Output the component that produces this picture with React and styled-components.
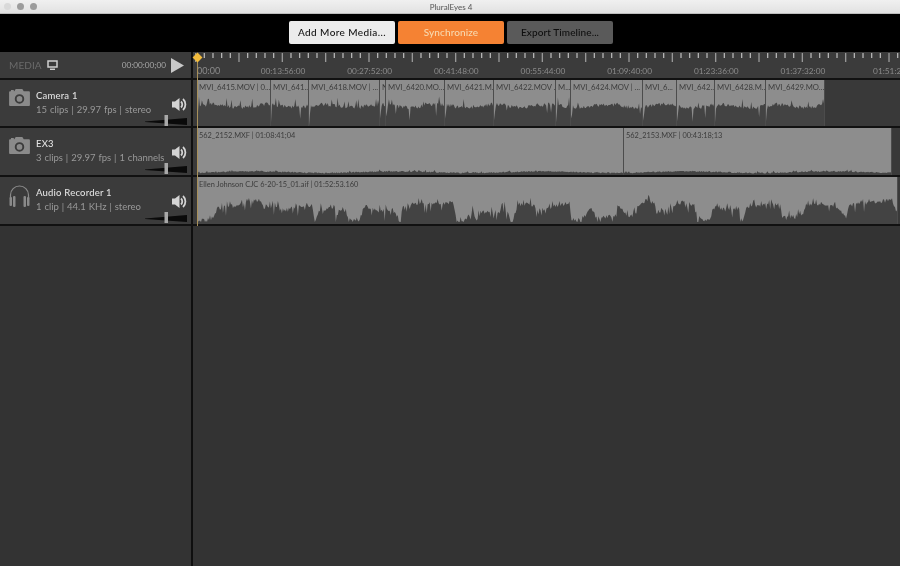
import React from 'react';
import styled, { createGlobalStyle } from 'styled-components';

const GlobalStyle = createGlobalStyle`
  html, body {
    margin: 0;
    padding: 0;
    background: #333;
    overflow: hidden;
  }
  * { box-sizing: border-box; }
`;

const LABELS = ['00:13:56:00', '00:27:52:00', '00:41:48:00', '00:55:44:00', '01:09:40:00', '01:23:36:00', '01:37:32:00', '01:51:28'];

const CAMERA_CLIPS = [
  ['MVI_6415.MOV | 0...', 197, 271],
  ['MVI_641...', 271, 309],
  ['MVI_6418.MOV | ...', 309, 380],
  ['N', 380, 386],
  ['MVI_6420.MO...', 386, 445],
  ['MVI_6421.M...', 445, 494],
  ['MVI_6422.MOV ...', 494, 556],
  ['M...', 556, 571],
  ['MVI_6424.MOV | ...', 571, 643],
  ['MVI_6...', 643, 677],
  ['MVI_642...', 677, 715],
  ['MVI_6428.M...', 715, 766],
  ['MVI_6429.MO...', 766, 825],
];

// top of the audio recorder waveform, read off the picture as [x, y]
const RECORDER_ENV = [
  [197, 221], [215, 218], [218, 208], [240, 205], [245, 200], [260, 200], [265, 210], [275, 205], [285, 210],
  [300, 207], [312, 205], [315, 220], [320, 210], [333, 208], [337, 215], [343, 208], [350, 218], [360, 220],
  [362, 210], [367, 205], [380, 212], [392, 208], [400, 222], [403, 206], [415, 203], [433, 204], [453, 202],
  [457, 220], [463, 222], [473, 212], [500, 212], [503, 202], [512, 222], [518, 207], [530, 203], [540, 210],
  [560, 205], [570, 203], [572, 220], [587, 215], [592, 207], [597, 218], [617, 215], [618, 205], [630, 218],
  [633, 210], [647, 200], [655, 203], [657, 214], [667, 208], [683, 202], [695, 205], [697, 218], [710, 220],
  [715, 208], [740, 210], [743, 222], [748, 207], [767, 204], [782, 205], [783, 218], [803, 215], [807, 205],
  [827, 204], [840, 210], [847, 218], [850, 205], [893, 200], [897, 212],
];

const envAt = x => {
  for (let i = 1; i < RECORDER_ENV.length; i++) {
    const [x0, y0] = RECORDER_ENV[i - 1];
    const [x1, y1] = RECORDER_ENV[i];
    if (x <= x1) return y0 + ((y1 - y0) * (x - x0)) / (x1 - x0);
  }
  return 212;
};

const makeRandom = seed => {
  let s = seed;
  return () => {
    s = (s * 16807) % 2147483647;
    return s / 2147483647;
  };
};

const cameraTop = (rand, x, from) => {
  const r = rand();
  let y = 104 + Math.sin(x / 9) * 1.5 + rand() * 4;
  if (r > 0.92) y -= 3 + rand() * 5;
  if (r < 0.03) y += 5 + rand() * 8;
  if (x - from < 2) y += 6;
  return y;
};

const ex3Top = (rand, x) => {
  const r = rand();
  let y = 171.5 + Math.sin(x / 23) * 0.8 + rand() * 1.2;
  if (r > 0.96) y -= 1.5;
  return y;
};

const recorderTop = (rand, x) => {
  const r = rand();
  let y = envAt(x) + rand() * 4 - 2;
  if (r > 0.88) y -= 2 + rand() * 4;
  if (r < 0.12) y += 3 + rand() * 6;
  return Math.min(y, 222);
};

const Waveform = ({ from, to, top, bottom, topFn, seed }) => {
  const rand = makeRandom(seed);
  const w = to - from;
  const h = bottom - top;
  const pts = [`0,${h}`];
  for (let x = from; x <= to; x++) {
    pts.push(`${x - from},${(topFn(rand, x, from) - top).toFixed(1)}`);
  }
  pts.push(`${w},${h}`);
  return (
    <WaveSvg viewBox={`0 0 ${w} ${h}`} preserveAspectRatio="none">
      <polygon points={pts.join(' ')} fill="#434343" />
    </WaveSvg>
  );
};

const Ruler = () => {
  const ticks = [];
  for (let i = 0; i < 82; i++) {
    const major = i % 5 === 0;
    const x = 2 + i * 8.667;
    ticks.push(<rect key={i} x={x} y="1" width="1.3" height={major ? 9 : 5} fill={major ? '#9a9a9a' : '#b5b5b5'} />);
  }
  return (
    <RulerTicks width="707" height="12">
      {ticks}
    </RulerTicks>
  );
};

const CameraIcon = () => (
  <IconSvg width="21" height="18" viewBox="0 0 22 19">
    <path
      fill="#8a8a8a"
      fillRule="evenodd"
      d="M7 1h7l1.5 2.5H21a1 1 0 0 1 1 1V18a1 1 0 0 1-1 1H1a1 1 0 0 1-1-1V4.500a1 1 0 0 1 1-1h1V2h3v1.500h.5zM11 6.500a5 5 0 1 0 0 10 5 5 0 0 0 0-10zM11 8.500a3 3 0 1 1 0 6 3 3 0 0 1 0-6z"
    />
  </IconSvg>
);

const HeadphonesIcon = () => (
  <IconSvg width="21" height="23" viewBox="0 0 21 23">
    <path fill="none" stroke="#8a8a8a" strokeWidth="1.2" d="M1.500 14V10a9 9 0 0 1 18 0v4" />
    <rect x="0.500" y="12" width="2.500" height="9" rx="1" fill="#8a8a8a" />
    <rect x="4" y="11" width="2.500" height="11" rx="1" fill="#8a8a8a" />
    <rect x="14.500" y="11" width="2.500" height="11" rx="1" fill="#8a8a8a" />
    <rect x="18" y="12" width="2.500" height="9" rx="1" fill="#8a8a8a" />
  </IconSvg>
);

const SpeakerIcon = () => (
  <svg width="15" height="15" viewBox="0 0 15 15">
    <path fill="#d4d4d4" d="M0 4.500h3L7.500 1v13L3 10.500H0z" />
    <path fill="none" stroke="#d4d4d4" strokeWidth="1.800" d="M9 4.500a4.200 4.200 0 0 1 0 6" />
    <path fill="none" stroke="#d4d4d4" strokeWidth="1.800" d="M11 2a7.500 7.500 0 0 1 0 11" />
  </svg>
);

const VolumeSlider = () => (
  <SliderSvg width="42" height="11" viewBox="0 0 42 11">
    <polygon points="0,6.500 42,3 42,10 0,7" fill="#0a0a0a" />
    <rect x="19.500" y="0" width="3.500" height="11" fill="#a8a8a8" />
  </SliderSvg>
);

const Track = ({ height, icon, name, meta, children }) => (
  <Row $height={height}>
    <Side>
      <IconSlot>{icon}</IconSlot>
      <TrackText>
        <TrackName>{name}</TrackName>
        <TrackMeta>{meta}</TrackMeta>
      </TrackText>
      <SpeakerSlot>
        <SpeakerIcon />
      </SpeakerSlot>
      <VolumeSlider />
    </Side>
    <Lane>{children}</Lane>
  </Row>
);

export default function App() {
  return (
    <Page>
      <GlobalStyle />
      <TitleBar>
        <Dots>
          <Dot $light />
          <Dot />
          <Dot />
        </Dots>
        PluralEyes 4
      </TitleBar>
      <Toolbar>
        <Button $kind="light">Add More Media...</Button>
        <Button $kind="orange">Synchronize</Button>
        <Button $kind="dark">Export Timeline...</Button>
      </Toolbar>
      <Main>
        <Row $height={28}>
          <Side $header>
            <MediaLabel>MEDIA</MediaLabel>
            <svg width="11" height="10" viewBox="0 0 11 10">
              <path fill="none" stroke="#cfcfcf" strokeWidth="1.500" d="M1 1h9v6H1z" />
              <path stroke="#cfcfcf" strokeWidth="1.500" d="M3 9.300h5" />
            </svg>
            <Timecode>00:00:00;00</Timecode>
            <svg width="13" height="15" viewBox="0 0 13 15">
              <polygon points="0,0 13,7.500 0,15" fill="#c9c9c9" />
            </svg>
          </Side>
          <RulerLane>
            <Ruler />
            <RulerLabels>
              <FirstLabel>00:00</FirstLabel>
              {LABELS.map(l => (
                <RulerLabel key={l}>{l}</RulerLabel>
              ))}
            </RulerLabels>
          </RulerLane>
        </Row>

        <Track height={48} icon={<CameraIcon />} name="Camera 1" meta="15 clips | 29.97 fps | stereo">
          {CAMERA_CLIPS.map(([label, from, to], i) => (
            <Clip key={from} $width={to - from}>
              <ClipLabel>{label}</ClipLabel>
              <Waveform from={from} to={to} top={93} bottom={126} topFn={cameraTop} seed={1000 + i * 77} />
            </Clip>
          ))}
        </Track>

        <Track height={49} icon={<CameraIcon />} name="EX3" meta="3 clips | 29.97 fps | 1 channels">
          <Clip $width={427}>
            <ClipLabel $small>562_2152.MXF | 01:08:41;04</ClipLabel>
            <Waveform from={197} to={624} top={141} bottom={175} topFn={ex3Top} seed={4242} />
          </Clip>
          <Clip $width={268}>
            <ClipLabel $small>562_2153.MXF | 00:43:18;13</ClipLabel>
            <Waveform from={624} to={892} top={141} bottom={175} topFn={ex3Top} seed={777} />
          </Clip>
        </Track>

        <Track height={49} icon={<HeadphonesIcon />} name="Audio Recorder 1" meta="1 clip | 44.1 KHz | stereo">
          <Clip $width={701}>
            <ClipLabel $small>Ellen Johnson CJC 6-20-15_01.aif | 01:52:53.160</ClipLabel>
            <Waveform from={197} to={898} top={190} bottom={224} topFn={recorderTop} seed={31337} />
          </Clip>
        </Track>

        <Filler>
          <Side $empty />
          <EmptyLane />
        </Filler>

        <Playhead />
        <Diamond />
      </Main>
    </Page>
  );
}

const Page = styled.div`
  width: 900px;
  height: 566px;
  display: flex;
  flex-direction: column;
  overflow: hidden;
  background: #333;
  font-family: Lato, 'Liberation Sans', sans-serif;
  filter: blur(0.35px);
`;

const TitleBar = styled.div`
  position: relative;
  height: 14px;
  flex: none;
  display: flex;
  align-items: center;
  justify-content: center;
  padding-left: 2px;
  background: linear-gradient(#f0f0f0, #e2e2e2);
  border-bottom: 1px solid #bdbdbd;
  color: #555;
  font-size: 8px;
`;

const Dots = styled.div`
  position: absolute;
  left: 4px;
  top: 3px;
  display: flex;
  gap: 6px;
`;

const Dot = styled.span`
  width: 7px;
  height: 7px;
  border-radius: 50%;
  background: ${props => (props.$light ? '#d9d9d9' : '#9c9c9c')};
`;

const Toolbar = styled.div`
  height: 38px;
  flex: none;
  display: flex;
  align-items: center;
  justify-content: center;
  gap: 3px;
  padding: 0 0 2px 2px;
  background: #000;
`;

const BUTTON_COLORS = {
  light: 'background: #ececec; color: #111; letter-spacing: 0.4px;',
  orange: 'background: #f58233; color: #f7d9b0; letter-spacing: 0.1px;',
  dark: 'background: #5a5a5a; color: #0e0e0e; letter-spacing: 0.1px;',
};

const Button = styled.div`
  width: 106px;
  height: 23px;
  display: flex;
  align-items: center;
  justify-content: center;
  border-radius: 2px;
  font-size: 10px;
  font-weight: 500;
  ${props => BUTTON_COLORS[props.$kind]}
`;

const Main = styled.div`
  position: relative;
  flex: 1;
  display: flex;
  flex-direction: column;
  min-height: 0;
`;

const Row = styled.div`
  flex: none;
  height: ${props => props.$height}px;
  display: flex;
  border-bottom: 2px solid #111;
`;

const Side = styled.div`
  position: relative;
  width: 193px;
  flex: none;
  display: flex;
  align-items: ${props => (props.$header ? 'center' : 'flex-start')};
  padding: ${props => (props.$header ? '0 7px 0 9px' : '0')};
  gap: ${props => (props.$header ? '5px' : '0')};
  background: ${props => (props.$empty ? '#333' : '#3b3b3b')};
  border-right: 2px solid #0f0f0f;
`;

const MediaLabel = styled.span`
  color: #6a6a6a;
  font-size: 10px;
  letter-spacing: 0.1px;
`;

const Timecode = styled.span`
  margin-left: auto;
  color: #a8a8a8;
  font-size: 8.2px;
`;

const IconSlot = styled.div`
  width: 36px;
  flex: none;
  padding: 8px 0 0 9px;
`;

const IconSvg = styled.svg`
  display: block;
`;

const TrackText = styled.div`
  display: flex;
  flex-direction: column;
  gap: 3px;
  padding-top: 10px;
`;

const TrackName = styled.div`
  color: #e0e0e0;
  font-size: 9.5px;
  line-height: 11px;
  font-weight: 500;
  letter-spacing: 0.2px;
`;

const TrackMeta = styled.div`
  color: #999;
  font-size: 9.5px;
  line-height: 12px;
  white-space: nowrap;
  word-spacing: 0.5px;
`;

const SpeakerSlot = styled.div`
  position: absolute;
  left: 172px;
  top: 17px;
  line-height: 0;
`;

const SliderSvg = styled.svg`
  position: absolute;
  left: 145px;
  top: 35px;
`;

const Lane = styled.div`
  flex: 1;
  min-width: 0;
  display: flex;
  padding-left: 4px;
  background: #393939;
  overflow: hidden;
`;

const RulerLane = styled.div`
  flex: 1;
  min-width: 0;
  background: #3b3b3b;
  overflow: hidden;
`;

const RulerTicks = styled.svg`
  display: block;
`;

const RulerLabels = styled.div`
  display: flex;
  padding-left: 4px;
  margin-top: 1px;
  color: #8a8a8a;
  font-size: 8.300px;
  line-height: 12px;
  white-space: nowrap;
`;

const FirstLabel = styled.span`
  width: 42.7px;
  flex: none;
  font-size: 9px;
`;

const RulerLabel = styled.span`
  width: 86.67px;
  flex: none;
  text-align: center;
`;

const Clip = styled.div`
  width: ${props => props.$width}px;
  flex: none;
  display: flex;
  flex-direction: column;
  background: #8d8d8d;
  border-right: 1px solid #4c4c4c;
  overflow: hidden;
`;

const ClipLabel = styled.div`
  height: 13px;
  flex: none;
  padding: ${props => (props.$small ? '3px' : '2px')} 0 0 2px;
  color: #3c3c3c;
  font-size: ${props => (props.$small ? '7.4px' : '7.7px')};
  line-height: 10px;
  white-space: nowrap;
  overflow: hidden;
`;

const WaveSvg = styled.svg`
  flex: 1;
  min-height: 0;
  width: 100%;
  display: block;
`;

const Filler = styled.div`
  flex: 1;
  display: flex;
  min-height: 0;
`;

const EmptyLane = styled.div`
  flex: 1;
  background: #333;
`;

const Playhead = styled.div`
  position: absolute;
  left: 196.500px;
  top: 4px;
  width: 1.500px;
  height: 170px;
  background: #a8905a;
`;

const Diamond = styled.div`
  position: absolute;
  left: 193.500px;
  top: 1.500px;
  width: 7px;
  height: 7px;
  background: #f2bb3c;
  transform: rotate(45deg);
`;
